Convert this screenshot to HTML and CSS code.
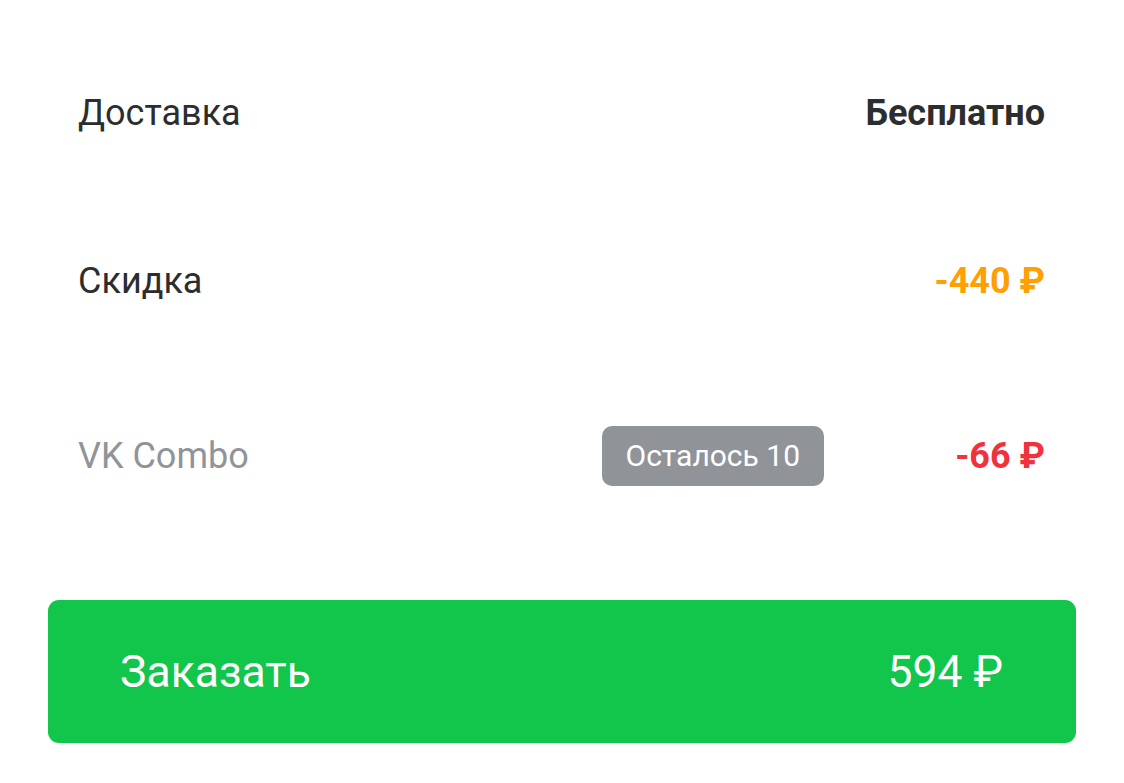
FILE: index.html
```html
<!DOCTYPE html>
<html lang="ru">
<head>
    <meta charset="utf-8">
    <title>Заказ</title>
    <link rel="stylesheet" href="styles.css">
</head>
<body>
    <div class="summary">
        <div class="row">
            <span class="label">Доставка</span>
            <span class="value free">Бесплатно</span>
        </div>
        <div class="row">
            <span class="label">Скидка</span>
            <span class="value discount">-440 ₽</span>
        </div>
        <div class="row combo">
            <span class="label muted">VK Combo</span>
            <span class="badge">Осталось 10</span>
            <span class="value combo-value">-66 ₽</span>
        </div>
    </div>
    <button class="order" type="button">
        <span>Заказать</span>
        <span>594 ₽</span>
    </button>
</body>
</html>
```

FILE: styles.css
```css
body { margin: 0; background: #fff; font-family: Roboto, "Noto Sans", sans-serif; color: #2c2d2e; }
.summary { padding: 83px 79px 0 78px; display: flex; flex-direction: column; }
.row { display: flex; align-items: center; height: 60px; font-size: 36px; }
.row + .row { margin-top: 108px; }
.row.combo { margin-top: 115px; }
.label { flex: 1; }
.label.muted { color: #909499; }
.value { font-weight: 700; font-size: 36px; }
.free { color: #2c2d2e; }
.discount { color: #ffa000; }
.combo-value { color: #f0323c; width: 221px; text-align: right; }
.badge { background: #909499; color: #fff; font-size: 30px; height: 60px; line-height: 60px; padding: 0 24px; border-radius: 10px; box-sizing: border-box; }
.order { display: flex; justify-content: space-between; align-items: center; margin: 114px 48px 0; width: 1028px; height: 143px; padding: 0 73px 0 72px; border: 0; border-radius: 11px; background: #12c64b; color: #fff; font-family: Roboto, "Noto Sans", sans-serif; font-size: 44.5px; }
```
